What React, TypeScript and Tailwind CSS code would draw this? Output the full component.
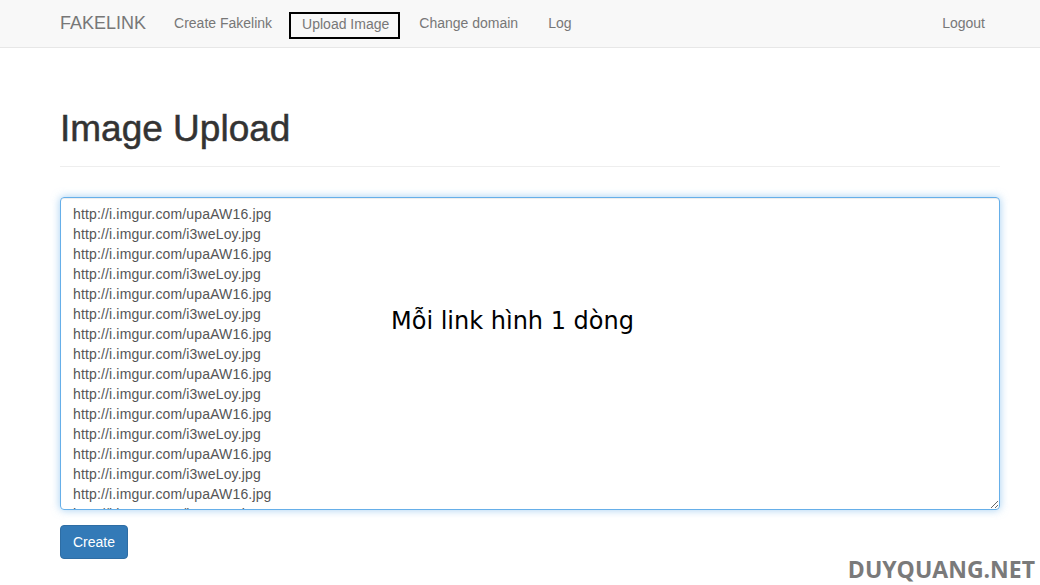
import React from "react";

const lines = Array.from({ length: 20 }, (_, i) =>
  i % 2 === 0 ? "http://i.imgur.com/upaAW16.jpg" : "http://i.imgur.com/i3weLoy.jpg"
).join("\n");

export default function App() {
  return (
    <div className="relative min-h-[585px] w-[1040px] overflow-hidden bg-white font-['Liberation_Sans',Arial,sans-serif] text-[14px] text-[#333]">
      <nav className="h-[48px] border-b border-[#e7e7e7] bg-[#f8f8f8]">
        <div className="ml-[60px] flex h-[47px] w-[925px] items-center">
          <span className="text-[18px] text-[#777]">FAKELINK</span>
          <div className="ml-[28px] flex items-center gap-[30px] text-[#777]">
            <span>Create Fakelink</span>
            <span className="relative leading-[20px]">
              Upload Image
              <span className="absolute left-[-13px] right-[-11px] top-[-2px] bottom-[-5px] border-2 border-black"></span>
            </span>
            <span>Change domain</span>
            <span>Log</span>
          </div>
          <span className="ml-auto text-[#777]">Logout</span>
        </div>
      </nav>

      <div className="ml-[60px] w-[940px]">
        <div className="mt-[60px] border-b border-[#eee] pb-[17px]">
          <h1 className="text-[37px] leading-[41px] text-[#333] [-webkit-text-stroke:0.5px_#333]">Image Upload</h1>
        </div>
        <div className="relative mt-[30px]">
          <textarea
            readOnly
            defaultValue={lines}
            className="block h-[313px] w-[940px] resize-y overflow-hidden rounded-[4px] border border-[#66afe9] px-[12px] py-[6px] font-['Liberation_Sans',Arial,sans-serif] text-[14px] leading-[20px] tracking-[0.15px] text-[#555] shadow-[inset_0_1px_1px_rgba(0,0,0,0.075),0_0_8px_rgba(102,175,233,0.6)] outline-none"
          />
          <span className="pointer-events-none absolute left-[331px] top-[110px] whitespace-nowrap font-['DejaVu_Sans',Verdana,sans-serif] text-[24px] leading-[28px] text-black">
            Mỗi link hình 1 dòng
          </span>
        </div>
        <button className="mt-[15px] h-[34px] rounded-[4px] border border-[#2e6da4] bg-[#337ab7] px-[12px] text-[14px] text-white">
          Create
        </button>
      </div>

      <span className="absolute right-[5px] top-[556px] whitespace-nowrap font-['Open_Sans',sans-serif] text-[23px] font-bold leading-[26px] text-[#7a7a7a]">
        DUYQUANG.NET
      </span>
    </div>
  );
}
